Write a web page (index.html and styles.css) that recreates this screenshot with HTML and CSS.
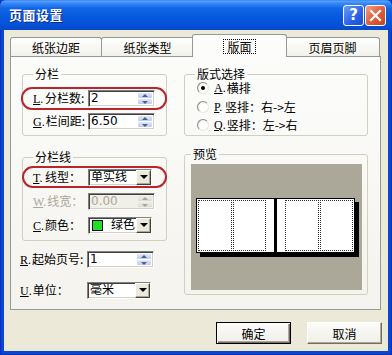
FILE: index.html
```html
<!DOCTYPE html>
<html lang="zh-CN">
<head>
  <meta charset="UTF-8" />
  <title>页面设置</title>
  <link rel="stylesheet" href="styles.css">
</head>
<body>

<div class="window">
  <div class="titlebar">
    <span class="title">页面设置</span>
    <div class="caption-btns">
      <span class="cap-btn help">?</span>
      <span class="cap-btn close">
        <svg width="19" height="19" viewBox="0 0 19 19"><path d="M5 5 L14 14 M14 5 L5 14" stroke="#fff" stroke-width="2.2" stroke-linecap="square"/></svg>
      </span>
    </div>
  </div>

  <div class="client">
    <div class="tabs">
      <div class="tab t1">纸张边距</div>
      <div class="tab t2">纸张类型</div>
      <div class="tab active"><span class="focus">版面</span></div>
      <div class="tab t4">页眉页脚</div>
    </div>

    <div class="panel">
      <div class="col">
        <fieldset class="group g-cols">
          <legend>分栏</legend>
          <div class="row mark">
            <label class="lbl"><span class="key"><u>L</u>.</span>分栏数:</label>
            <div class="spin"><span class="val">2</span><span class="spin-btns"><i class="up"></i><i class="down"></i></span></div>
          </div>
          <div class="row">
            <label class="lbl"><span class="key"><u>G</u>.</span>栏间距:</label>
            <div class="spin"><span class="val">6.50</span><span class="spin-btns"><i class="up"></i><i class="down"></i></span></div>
          </div>
        </fieldset>

        <fieldset class="group g-line">
          <legend>分栏线</legend>
          <div class="row mark">
            <label class="lbl"><span class="key"><u>T</u>.</span>线型：</label>
            <div class="combo"><span class="val">单实线</span><span class="drop"><i></i></span></div>
          </div>
          <div class="row disabled">
            <label class="lbl"><span class="key"><u>W</u>.</span>线宽：</label>
            <div class="spin"><span class="val">0.00</span><span class="spin-btns"><i class="up"></i><i class="down"></i></span></div>
          </div>
          <div class="row">
            <label class="lbl"><span class="key"><u>C</u>.</span>颜色：</label>
            <div class="combo"><span class="val"><b class="swatch"></b>绿色</span><span class="drop"><i></i></span></div>
          </div>
        </fieldset>

        <div class="row outer r-start">
          <label class="lbl"><span class="key"><u>R</u>.</span>起始页号:</label>
          <div class="spin"><span class="val">1</span><span class="spin-btns"><i class="up"></i><i class="down"></i></span></div>
        </div>
        <div class="row outer r-unit">
          <label class="lbl"><span class="key"><u>U</u>.</span>单位：</label>
          <div class="combo"><span class="val">毫米</span><span class="drop"><i></i></span></div>
        </div>
      </div>

      <div class="col">
        <fieldset class="group g-mode">
          <legend>版式选择</legend>
          <div class="radio-row"><span class="radio on"></span><span class="key"><u>A</u>.</span>横排</div>
          <div class="radio-row"><span class="radio"></span><span class="key"><u>P</u>.</span>竖排：右-&gt;左</div>
          <div class="radio-row"><span class="radio"></span><span class="key"><u>Q</u>.</span>竖排：左-&gt;右</div>
        </fieldset>

        <fieldset class="group g-preview">
          <legend>预览</legend>
          <div class="preview">
            <div class="pages">
              <div class="page left"><div class="pcol"></div><div class="pcol"></div></div>
              <div class="page right"><div class="pcol"></div><div class="pcol"></div></div>
            </div>
          </div>
        </fieldset>
      </div>
    </div>

    <div class="buttons">
      <button class="btn default">确定</button>
      <button class="btn">取消</button>
    </div>
  </div>
</div>

</body>
</html>
```

FILE: styles.css
```css
body {
  margin: 0;
  background: #fff;
  font-family: "Noto Sans CJK SC", "Liberation Sans", sans-serif;
  font-size: 12px;
  line-height: 14px;
  color: #000;
}

.window {
  width: 392px;
  height: 355px;
  box-sizing: border-box;
  padding: 0 4px 4px;
  display: flex;
  flex-direction: column;
  background: #0a46d2;
  box-shadow: inset 1px 0 #0831b8, inset -1px 0 #0831b8, inset 0 -1px #0831b8;
}

/* title bar */
.titlebar {
  height: 30px;
  flex: none;
  margin: 0 -4px;
  padding: 0 6px 0 9px;
  display: flex;
  align-items: center;
  border-radius: 6px 6px 0 0;
  background: linear-gradient(#2a7cf0 0, #5ba0ff 1px, #3a8cf8 3px, #1366e6 8px, #0658dd 17px, #0552d8 25px, #0848c8 30px);
}

.title {
  flex: 1;
  color: #fff;
  font-weight: bold;
  font-size: 13px;
  letter-spacing: 0.5px;
  text-shadow: 1px 1px 0 #0a2a8c;
  padding-bottom: 1px;
}

.caption-btns {
  display: flex;
  gap: 1px;
  margin-top: 1px;
}

.cap-btn {
  width: 21px;
  height: 21px;
  box-sizing: border-box;
  border: 1px solid #fff;
  border-radius: 3px;
  display: flex;
  align-items: center;
  justify-content: center;
}

.cap-btn.help {
  background: linear-gradient(135deg, #6a9ef8, #2860e8 60%, #1a4fd8);
  color: #fff;
  font-family: "DejaVu Sans", sans-serif;
  font-weight: bold;
  font-size: 15px;
  line-height: 1;
}

.cap-btn.close {
  background: linear-gradient(135deg, #f0a080, #e0603c 50%, #c8401e);
}

/* client area */
.client {
  flex: 1;
  background: #ece9d8;
  display: flex;
  flex-direction: column;
}

.tabs {
  display: flex;
  align-items: flex-end;
  height: 22px;
  margin-top: 4px;
  padding-left: 6px;
  position: relative;
  z-index: 1;
}

.tab {
  height: 19px;
  box-sizing: border-box;
  border: 1px solid #919b9c;
  border-bottom: 0;
  border-radius: 3px 3px 0 0;
  background: linear-gradient(#fefefe, #f2f1ea);
  display: flex;
  align-items: center;
  justify-content: center;
  padding-top: 1px;
}

.t1 { width: 92px; }
.t2 { width: 93px; margin-left: -1px; }
.t4 { width: 95px; }

.tab.active {
  width: 95px;
  height: 23px;
  margin: 0 -2px -1px;
  background: #fcfcfb;
  position: relative;
  padding-top: 0;
}

.focus {
  outline: 1px dotted #000;
  padding: 0 3px;
  line-height: 13px;
}

.panel {
  height: 254px;
  margin-right: 7px;
  margin-left: 6px;
  box-sizing: border-box;
  border: 1px solid #919b9c;
  background: linear-gradient(#fcfcfb, #f4f3ee);
  display: grid;
  grid-template-columns: 145px 184px;
  column-gap: 17px;
  align-items: start;
  padding: 11px 13px 0 11px;
}

.col {
  display: flex;
  flex-direction: column;
}

/* group boxes */
.group {
  margin: 0;
  min-width: 0;
  padding: 0 10px 2px;
  border: 1px solid #d0d0bf;
  border-radius: 3px;
}

.group legend {
  padding: 0 2px;
  line-height: 12px;
  color: #000;
}

.g-cols { padding-top: 7px; }
.g-line { margin-top: 15px; padding-top: 2px; padding-bottom: 3px; }
.g-mode { padding-top: 1px; padding-bottom: 3px; display: flex; flex-direction: column; gap: 4.5px; }
.g-preview { margin-top: 12px; padding: 4px 5px 4px 6px; }

.row {
  display: flex;
  align-items: center;
  height: 23px;
  position: relative;
}

.g-line .row { height: 24px; }

.mark::after {
  content: "";
  position: absolute;
  top: 0;
  bottom: 0;
  left: -12px;
  right: -11px;
  border: 2px solid #b8262c;
  border-radius: 11px;
}

.g-line .mark::after { left: -11px; top: 1px; bottom: 1px; }

.lbl {
  width: 55px;
  flex: none;
  white-space: nowrap;
}

.key {
  display: inline-block;
  min-width: 11px;
  margin-right: 1px;
  font-family: "Liberation Serif", serif;
}

.outer { height: 22px; }
.outer .lbl { width: 67px; margin-left: -2px; }
.outer .key { min-width: 8px; }
.r-start { margin-top: 7px; }
.r-unit { margin-top: 9px; }

.disabled .lbl { color: #aca899; }

/* spin edit */
.spin, .combo {
  height: 17px;
  box-sizing: border-box;
  display: flex;
  align-items: center;
  background: #fff;
  border: 1px solid;
  border-color: #808080 #fff #fff #808080;
  box-shadow: inset 1px 1px #404040, inset -1px -1px #d4d0c8;
  padding: 2px;
}

.spin { width: 67px; }
.combo { width: 64px; }

.val {
  flex: 1;
  min-width: 0;
  height: 13px;
  overflow: hidden;
  font-family: "DejaVu Sans", "Noto Sans CJK SC", sans-serif;
  font-size: 12px;
  line-height: 13px;
  display: flex;
  align-items: center;
  white-space: nowrap;
}

.spin-btns {
  width: 14px;
  align-self: stretch;
  display: flex;
  flex-direction: column;
  gap: 1px;
}

.spin-btns i {
  flex: 1;
  background: linear-gradient(#dfe8fb, #bccbf2);
  border-radius: 1px;
  position: relative;
}

.spin-btns i::after {
  content: "";
  position: absolute;
  left: 4px;
  top: 2px;
  border-left: 3px solid transparent;
  border-right: 3px solid transparent;
}

.spin-btns .up::after { border-bottom: 3px solid #4d6185; top: 1px; }
.spin-btns .down::after { border-top: 3px solid #4d6185; }

.disabled .spin { background: #f0efe8; }
.disabled .val { color: #aca899; }
.disabled .spin-btns i { background: linear-gradient(#eeeeea, #dcdbd2); }
.disabled .spin-btns i::after { border-top-color: #aca899; border-bottom-color: #aca899; }

.drop {
  width: 15px;
  align-self: stretch;
  margin: -2px -2px -2px 0;
  box-sizing: border-box;
  background: #ece9d8;
  border: 1px solid;
  border-color: #fff #404040 #404040 #fff;
  box-shadow: inset -1px -1px #aca899;
  display: flex;
  align-items: center;
  justify-content: center;
}

.drop i {
  border-left: 4px solid transparent;
  border-right: 4px solid transparent;
  border-top: 4px solid #000;
}

.swatch {
  flex: none;
  width: 9px;
  height: 9px;
  border: 1px solid #000;
  background: #22e022;
  margin: 0 8px 0 1px;
}

/* radios */
.radio-row {
  height: 14px;
  display: flex;
  align-items: center;
  white-space: nowrap;
}

.radio {
  width: 12px;
  height: 12px;
  box-sizing: border-box;
  border-radius: 50%;
  border: 1px solid;
  border-color: #8a8a80 #e8e8e0 #e8e8e0 #8a8a80;
  background: radial-gradient(circle at 60% 60%, #fff 40%, #e4e2d6);
  margin: 0 5px 0 2px;
  position: relative;
}

.radio.on::after {
  content: "";
  position: absolute;
  left: 3px;
  top: 3px;
  width: 4px;
  height: 4px;
  border-radius: 50%;
  background: #000;
}

.radio-row .key { min-width: 10px; }

/* preview */
.preview {
  height: 126px;
  background: #aca899;
  display: flex;
  align-items: center;
  justify-content: center;
}

.pages {
  width: 159px;
  height: 55px;
  box-sizing: border-box;
  display: flex;
  border: 1px solid #000;
  background: #fff;
  box-shadow: 4px 4px 0 #000;
  margin: 0 2px 4px 0;
}

.page {
  flex: 1;
  display: flex;
  gap: 1px;
  padding: 1px;
}

.page.left { padding-right: 8px; border-right: 3px solid #000; }
.page.right { padding-left: 8px; }

.pcol {
  flex: 1;
  border: 1px dotted #333;
}

/* dialog buttons */
.buttons {
  display: flex;
  justify-content: flex-end;
  gap: 16px;
  margin-top: 12px;
  padding-right: 6px;
}

.btn {
  width: 75px;
  height: 22px;
  box-sizing: border-box;
  font-family: "Noto Sans CJK SC", sans-serif;
  font-size: 12px;
  color: #000;
  padding: 0;
  background: linear-gradient(#fbfbf8, #f0efe8);
  border: 1px solid;
  border-color: #fff #716f64 #716f64 #fff;
  box-shadow: inset -1px -1px #aca899;
}

.btn.default {
  border: 1px solid #000;
  box-shadow: inset 1px 1px #fff, inset -1px -1px #716f64, inset -2px -2px #aca899;
}
```
